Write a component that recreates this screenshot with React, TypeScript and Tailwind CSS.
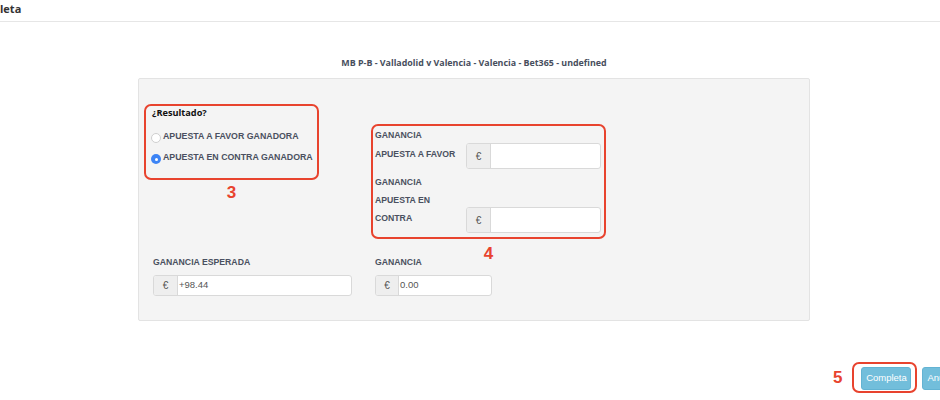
import React from "react";

const lbl = "font-['Liberation_Sans',Arial,sans-serif] font-bold text-[8.7px] text-[#4a5060] uppercase";

function Addon({ w, h, value, total }: { w: number; h: number; value?: string; total: number }) {
  return (
    <div className="flex border border-[#d9d9d9] rounded-[3px] bg-white overflow-hidden shrink-0" style={{ width: total, height: h }}>
      <div className="flex items-center justify-center bg-[#eeeeee] border-r border-[#d9d9d9] text-[10px] text-[#555] font-['Liberation_Sans',Arial,sans-serif]" style={{ width: w }}>
        €
      </div>
      <div className="flex items-center pl-[1px] text-[9.5px] text-[#555] font-['Liberation_Sans',Arial,sans-serif]">{value}</div>
    </div>
  );
}

export default function App() {
  return (
    <div className="w-[940px] h-[400px] overflow-hidden bg-white relative font-['Liberation_Sans',Arial,sans-serif]">
      <div className="h-[22px] border-b border-[#e6e6e6] flex items-start">
        <span className="font-['Open_Sans',sans-serif] font-bold text-[11px] leading-[18px] text-[#333]">leta</span>
      </div>
      <div className="mt-[34px] w-[672px] ml-[138px] text-center font-['Open_Sans',sans-serif] font-bold text-[8.9px] leading-[14px] text-[#474e5d]">
        MB P-B - Valladolid v Valencia - Valencia - Bet365 - undefined
      </div>
      <div className="mt-[8px] ml-[138px] w-[672px] h-[243px] bg-[#f4f4f4] border border-[#e3e3e3] rounded-[2px] flex flex-col">
        <div className="flex items-start pl-[5px]">
          <div className="relative mt-[25px] w-[175px] h-[76px] border-2 border-[#e8432e] rounded-[7px] pl-[6px]">
            <div className="font-['Open_Sans',sans-serif] font-bold text-[9.2px] leading-[14px] text-[#111]">¿Resultado?</div>
            <div className="mt-[6px] -ml-[1px] flex flex-col">
              <div className="h-[21px] flex items-center">
                <span className="w-[10px] h-[10px] rounded-full bg-white border border-[#cfcfcf] mt-[3px]"></span>
                <span className={lbl + " ml-[2px] text-[8.8px]"}>APUESTA A FAVOR GANADORA</span>
              </div>
              <div className="h-[21px] flex items-center">
                <span className="w-[10px] h-[10px] rounded-full bg-[#3d84f5] flex items-center justify-center mt-[3px]">
                  <span className="w-[3px] h-[3px] rounded-full bg-white"></span>
                </span>
                <span className={lbl + " ml-[2px] text-[8.8px]"}>APUESTA EN CONTRA GANADORA</span>
              </div>
            </div>
            <div className="absolute left-0 right-0 top-full mt-[6px] text-center text-[17px] leading-[17px] font-bold text-[#e8432e]">3</div>
          </div>
          <div className="relative ml-[52px] mt-[45px] w-[235px] h-[115px] border-2 border-[#e8432e] rounded-[7px] pl-[2px]">
            <div className="flex items-end">
              <div className={lbl + " w-[91px] leading-[19px] pb-[5px]"}>
                GANANCIA
                <br />
                APUESTA A FAVOR
              </div>
              <Addon w={24} h={26} total={135} />
            </div>
            <div className="flex items-end mt-[4px]">
              <div className={lbl + " w-[91px] leading-[18px] pb-[6px]"}>
                GANANCIA
                <br />
                APUESTA EN
                <br />
                CONTRA
              </div>
              <Addon w={24} h={26} total={135} />
            </div>
            <div className="absolute left-0 right-0 top-full mt-[8px] text-center text-[17px] leading-[17px] font-bold text-[#e8432e]">4</div>
          </div>
        </div>
        <div className="flex mt-[17px]">
          <div className="ml-[14px] w-[222px]">
            <div className={lbl + " leading-[12px]"}>GANANCIA ESPERADA</div>
            <div className="mt-[7px]">
              <Addon w={24} h={21} total={199} value="+98.44" />
            </div>
          </div>
          <div>
            <div className={lbl + " leading-[12px]"}>GANANCIA</div>
            <div className="mt-[7px]">
              <Addon w={23} h={21} total={117} value="0.00" />
            </div>
          </div>
        </div>
      </div>
      <div className="mt-[41px] ml-[833px] flex items-center w-[200px]">
        <span className="text-[17px] leading-[17px] font-bold text-[#e8432e]">5</span>
        <div className="ml-[10px] w-[65px] h-[31px] border-2 border-[#e8432e] rounded-[7px] pl-[7px] pt-[3px]">
          <div className="w-[50px] h-[23px] rounded-[3px] bg-[#72bedb] border border-[#63b3d3] text-white text-[9.5px] flex items-center justify-center">
            Completa
          </div>
        </div>
        <div className="ml-[5px] mt-[2px] w-[50px] h-[23px] rounded-[3px] bg-[#72bedb] border border-[#63b3d3] text-white text-[9.5px] flex items-center pl-[4px]">
          Anular
        </div>
      </div>
    </div>
  );
}
